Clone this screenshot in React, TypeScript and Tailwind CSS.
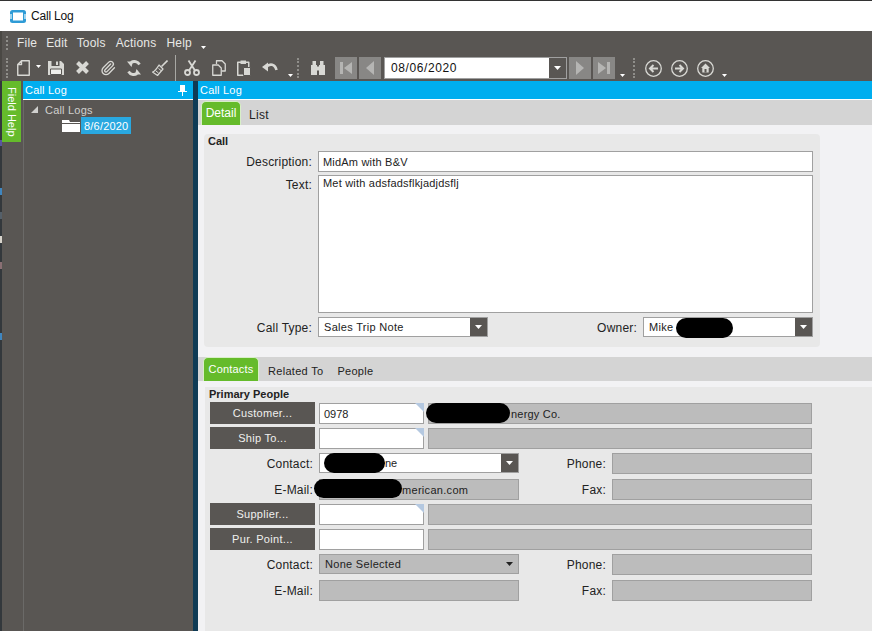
import React from "react";
import { Paperclip } from "lucide-react";

const L = "#d8d8d4";
const D = "#595653";

const Grip = ({ h = 20, className = "" }: { h?: number; className?: string }) => (
  <div className={"w-[2px] border-l-2 border-dotted border-[#8f8e8a] shrink-0 " + className} style={{ height: h }} />
);

const More = ({ className = "" }: { className?: string }) => (
  <svg width="5" height="3" viewBox="0 0 5 3" className={"shrink-0 " + className}><path d="M0 0h5L2.500 3z" fill="#fff" /></svg>
);

const Icon = ({ w = 16, className = "", children }: { w?: number; className?: string; children: React.ReactNode }) => (
  <svg width={w} height="16" viewBox={`0 0 ${w} 16`} fill="none" stroke={L} strokeLinejoin="round" className={"shrink-0 " + className}>{children}</svg>
);

const NavBtn = ({ d }: { d: React.ReactNode }) => (
  <div className="w-[22px] h-[22px] bg-[#888785] flex items-center justify-center">
    <svg width="16" height="16" viewBox="0 0 16 16" fill="#b5b5b3">{d}</svg>
  </div>
);

const Caret = () => (
  <div className="w-[17px] self-stretch bg-[#595653] flex items-center justify-center shrink-0">
    <svg width="7" height="4" viewBox="0 0 7 4"><path d="M0 0h7L3.500 4z" fill="#fff" /></svg>
  </div>
);

const Redact = ({ className }: { className: string }) => (
  <span className={"absolute bg-black rounded-[10px] " + className} />
);

const Lookup = ({ label }: { label: string }) => (
  <div className="w-[105px] h-[22px] bg-[#595653] text-[#f0f0ee] text-[11px] flex items-center justify-center tracking-[0.3px] shrink-0">{label}</div>
);

const WhiteField = ({ corner, children }: { corner?: boolean; children?: React.ReactNode }) => (
  <div className="relative w-[105px] h-[21px] mt-[1px] bg-white border border-[#a0a0a0] flex items-center pl-[4px] text-[#222] shrink-0">
    {children}
    {corner && <span className="absolute top-[-1px] right-[-1px] w-0 h-0 border-l-[9px] border-l-transparent border-t-[9px] border-t-[#b4c8e0]" />}
  </div>
);

const Gray = ({ className, children }: { className: string; children?: React.ReactNode }) => (
  <div className={"h-[21px] bg-[#bcbcbc] border border-[#a0a0a0] flex items-center shrink-0 " + className}>{children}</div>
);

const Label = ({ w = 105, pr = 6, low, children }: { w?: number; pr?: number; low?: boolean; children: React.ReactNode }) => (
  <div className={"text-right text-[#222] shrink-0 tracking-[0.2px] " + (low ? "pt-[2px]" : "")} style={{ width: w, paddingRight: pr }}>{children}</div>
);

const spots: [number, string][] = [
  [59, "#33383c"], [6, "#5a55a0"], [42, "#33383c"], [7, "#3f86c0"], [17, "#33383c"], [7, "#55606a"],
  [17, "#33383c"], [7, "#d8d4cc"], [19, "#33383c"], [7, "#8a7074"], [64, "#33383c"], [7, "#3f86c0"], [341, "#33383c"],
];

export default function App() {
  return (
    <div className="w-[872px] h-[631px] overflow-hidden flex flex-col bg-[#595653] text-[12px] leading-[14px] text-[#222] font-['Liberation_Sans',sans-serif]">
      <div className="h-[31px] shrink-0 bg-white border-t border-[#333] flex items-center pl-[10px] gap-[5px]">
        <svg width="16" height="13" viewBox="0 0 16 13">
          <rect x="0" y="0" width="16" height="13" rx="2.500" fill="#2e9bd6" />
          <rect x="3" y="2.500" width="10" height="8" fill="#fff" />
          <rect x="0" y="4" width="2" height="5" fill="#9fd4ee" />
          <rect x="14" y="4" width="2" height="5" fill="#9fd4ee" />
        </svg>
        <span className="text-[#111] text-[12px] tracking-[-0.2px]">Call Log</span>
      </div>

      <div className="flex-1 flex min-h-0">
        <div className="w-[2px] shrink-0 flex flex-col">
          <div className="h-[50px] bg-[#4a4844] shrink-0" />
          {spots.map(([h, c], i) => (
            <div key={i} className="shrink-0" style={{ height: h, backgroundColor: c }} />
          ))}
        </div>

        <div className="flex-1 min-w-0 flex flex-col">
          <div className="h-[24px] shrink-0 flex items-center text-[#e8e8e6] tracking-[0.2px]">
            <Grip h={14} className="ml-[4px]" />
            <span className="ml-[9px]">File</span>
            <span className="ml-[9px]">Edit</span>
            <span className="ml-[9px]">Tools</span>
            <span className="ml-[10px]">Actions</span>
            <span className="ml-[10px]">Help</span>
            <More className="ml-[9px] mt-[8px]" />
          </div>

          <div className="h-[26px] shrink-0 flex items-center">
            <Grip className="ml-[4px]" />
            <Icon w={13} className="ml-[9px]">
              <path d="M4.500.75h7.750v14.500H.75V4.500z M4.500.75V4.500H.75" strokeWidth="1.400" />
            </Icon>
            <More className="ml-[6px] mb-[3px]" />
            <Icon className="ml-[7px]">
              <path d="M0 1h13l3 3v11H0z" fill={L} stroke="none" />
              <rect x="3.500" y="1" width="8" height="5" fill={D} stroke="none" />
              <rect x="8" y="1.500" width="2" height="3.500" fill={L} stroke="none" />
              <rect x="2.500" y="9" width="11" height="5.500" fill="#efefec" stroke={D} strokeWidth="1" />
            </Icon>
            <Icon w={15} className="ml-[11px]">
              <path d="M2.500 2.500l10 10M12.500 2.500l-10 10" strokeWidth="4" />
            </Icon>
            <Paperclip size={16} strokeWidth={2} color={L} className="ml-[10px] shrink-0" />
            <Icon className="ml-[10px]">
              <path d="M13.500 4.500A6 6 0 0 0 5 2.500" strokeWidth="2.800" />
              <path d="M2.500 11.500A6 6 0 0 0 11 13.500" strokeWidth="2.800" />
              <path d="M1 1.500h6L5.500 7zM15 14.500H9L10.500 9z" fill={L} stroke="none" />
            </Icon>
            <Icon className="ml-[10px]">
              <path d="M15.500.5L9.500 6.500" strokeWidth="1.600" />
              <path d="M7 5l4 4-5.500 6.500L.5 12C3 11.500 5 8 7 5z" strokeWidth="1.200" />
              <path d="M4 11l2.500 2M6.500 8.500l2.500 2" strokeWidth="1" />
            </Icon>
            <div className="w-[1px] h-[26px] bg-[#a8a8a4] ml-[7px] shrink-0" />
            <Icon className="ml-[8px]">
              <circle cx="3.500" cy="12.500" r="2.500" strokeWidth="1.800" />
              <circle cx="12.500" cy="12.500" r="2.500" strokeWidth="1.800" />
              <path d="M5 10.500L11.500.5M11 10.500L4.500.5" strokeWidth="1.800" />
            </Icon>
            <Icon w={14} className="ml-[12px]">
              <path d="M4.500 4V.75H10l3.250 3.250V11H10" strokeWidth="1.300" />
              <path d="M.75 5h5.500l3 3v7.250H.75z" strokeWidth="1.300" />
            </Icon>
            <Icon w={14} className="ml-[11px]">
              <rect x=".75" y="2.250" width="11" height="13" strokeWidth="1.500" />
              <rect x="3.500" y=".5" width="5.500" height="3.500" fill={L} stroke="none" />
              <rect x="6.500" y="7.500" width="7" height="8" fill={L} stroke={D} strokeWidth="1" />
            </Icon>
            <Icon className="ml-[11px]">
              <path d="M4 7c4-4 9-3 10.500 3" strokeWidth="2.600" />
              <path d="M0 7l6-4.500v9z" fill={L} stroke="none" />
            </Icon>
            <More className="ml-[10px] mt-[14px]" />
            <Grip className="ml-[4px]" />
            <Icon className="ml-[11px]">
              <path d="M2.500 1H6v4H2.500zM10 1h3.500v4H10zM1 5h6v10H1zM9 5h6v10H9zM7 6.500h2v4H7z" fill={L} stroke="none" />
            </Icon>
            <div className="flex gap-[2px] ml-[9px] shrink-0">
              <NavBtn d={<path d="M2 2h3v12H2zM14 2v12L6 8z" />} />
              <NavBtn d={<path d="M12 1v14L4 8z" />} />
            </div>
            <div className="w-[183px] h-[22px] ml-[3px] bg-white border border-[#a0a0a0] flex items-center text-[#111] shrink-0">
              <span className="flex-1 pl-[6px] tracking-[0.6px]">08/06/2020</span>
              <Caret />
            </div>
            <div className="flex gap-[2px] ml-[2px] shrink-0">
              <NavBtn d={<path d="M4 1v14l8-7z" />} />
              <NavBtn d={<path d="M2 2v12l8-6zM11 2h3v12h-3z" />} />
            </div>
            <More className="ml-[5px] mt-[14px]" />
            <Grip className="ml-[8px]" />
            <svg width="17" height="17" viewBox="0 0 17 17" fill="none" stroke={L} strokeWidth="1.300" className="ml-[10px] shrink-0"><circle cx="8.500" cy="8.500" r="7.800" /><path d="M13 8.500H5M8.500 5L5 8.500 8.500 12" strokeWidth="2" /></svg>
            <svg width="17" height="17" viewBox="0 0 17 17" fill="none" stroke={L} strokeWidth="1.300" className="ml-[9px] shrink-0"><circle cx="8.500" cy="8.500" r="7.800" /><path d="M4 8.500h8M8.500 5L12 8.500 8.500 12" strokeWidth="2" /></svg>
            <svg width="17" height="17" viewBox="0 0 17 17" fill="none" stroke={L} strokeWidth="1.300" className="ml-[9px] shrink-0"><circle cx="8.500" cy="8.500" r="7.800" /><path d="M8.500 3.500L4 8h1.300v4.500h6.400V8H13z" fill={L} stroke="none" /><rect x="7.500" y="9" width="2" height="3.500" fill={D} stroke="none" /></svg>
            <More className="ml-[8px] mt-[14px]" />
          </div>

          <div className="flex-1 flex min-h-0">
            <div className="w-[19px] shrink-0">
              <div className="h-[61px] bg-[#65bb2b] flex items-center justify-center">
                <span className="[writing-mode:vertical-rl] text-white text-[11px]">Field Help</span>
              </div>
            </div>
            <div className="w-[2px] shrink-0" />
            <div className="w-[170px] shrink-0 flex flex-col">
              <div className="h-[18px] bg-[#00aeef] text-white text-[11px] flex items-center pl-[2px] tracking-[0.2px] justify-between pr-[6px]">
                <span>Call Log</span>
                <svg width="9" height="11" viewBox="0 0 9 11" fill="#fff"><path d="M2 0h5v6h2v1H5v4H4V7H0V6h2z" /></svg>
              </div>
              <div className="h-[1px] bg-white" />
              <div className="flex-1 border-l border-[#6b6a68] pl-[7px] pt-[3px] text-[#d0d0ce] text-[11px]">
                <div className="flex items-center h-[13px] tracking-[0.2px]">
                  <svg width="7" height="7" viewBox="0 0 7 7" className="mr-[7px]"><path d="M7 0v7H0z" fill="#d0d0ce" /></svg>
                  Call Logs
                </div>
                <div className="flex items-center h-[17px] pl-[31px] mt-[1px]">
                  <svg width="18" height="13" viewBox="0 0 18 13" className="mr-[1px]"><path d="M0 1h7l1 2h10v10H0z" fill="#fff" /><rect x="0" y="4" width="18" height="1" fill="#595653" /></svg>
                  <span className="bg-[#29a8e0] text-white h-[17px] px-[3px] flex items-center tracking-[0.2px]">8/6/2020</span>
                </div>
              </div>
            </div>
            <div className="w-[5px] bg-[#0f3b55] shrink-0" />
            <div className="flex-1 min-w-0 flex flex-col bg-[#f2f2f4]">
              <div className="h-[18px] bg-[#00aeef] text-white text-[11px] flex items-center pl-[2px] tracking-[0.2px] shrink-0">Call Log</div>
              <div className="h-[1px] bg-white shrink-0" />
              <div className="h-[25px] bg-[#d4d4d4] flex pl-[3px] items-stretch shrink-0">
                <div className="w-[40px] mt-[1px] bg-[#65bb2b] border border-b-0 border-[#d8efc8] rounded-t-[5px] text-white flex items-center justify-center pb-[2px]">Detail</div>
                <div className="ml-[8px] flex items-center pt-[5px] text-[#222] tracking-[0.3px]">List</div>
              </div>

              <div className="ml-[6px] mt-[9px] w-[616px] h-[213px] bg-[#e8e8e8] rounded-[4px] flex flex-col shrink-0">
                <div className="pl-[4px] font-bold text-[11px] text-[#222] h-[17px]">Call</div>
                <div className="flex h-[21px] items-center">
                  <Label w={114}>Description:</Label>
                  <div className="w-[495px] h-[21px] bg-white border border-[#a0a0a0] flex items-center pl-[4px] text-[11px] tracking-[0.2px]">MidAm with B&amp;V</div>
                </div>
                <div className="flex mt-[3px]">
                  <Label w={114}><span className="block pt-[3px]">Text:</span></Label>
                  <div className="w-[495px] h-[138px] bg-white border border-[#a0a0a0] pl-[4px] text-[11px] tracking-[0.2px]">Met with adsfadsflkjadjdsflj</div>
                </div>
                <div className="flex items-center h-[20px] mt-[4px]">
                  <Label w={114} low>Call Type:</Label>
                  <div className="w-[170px] h-[20px] bg-white border border-[#a0a0a0] flex items-center pl-[5px] text-[11px] tracking-[0.3px]">
                    <span className="flex-1">Sales Trip Note</span><Caret />
                  </div>
                  <Label w={155} low>Owner:</Label>
                  <div className="relative w-[170px] h-[20px] bg-white border border-[#a0a0a0] flex items-center pl-[5px] text-[11px] tracking-[0.3px]">
                    <span className="flex-1">Mike</span><Caret />
                    <Redact className="left-[32px] top-[0px] w-[57px] h-[20px]" />
                  </div>
                </div>
              </div>

              <div className="mt-[10px] h-[24px] bg-[#d4d4d4] flex pl-[5px] items-stretch shrink-0">
                <div className="w-[56px] bg-[#65bb2b] border border-b-0 border-[#d8efc8] rounded-t-[5px] text-white flex items-center justify-center pb-[2px] tracking-[0.2px] text-[11px]">Contacts</div>
                <div className="ml-[9px] flex items-center pt-[3px] tracking-[0.3px] text-[11px]">Related To</div>
                <div className="ml-[14px] flex items-center pt-[3px] tracking-[0.3px] text-[11px]">People</div>
              </div>

              <div className="ml-[7px] mt-[6px] flex-1 bg-[#e8e8e8] pl-[5px] flex flex-col">
                <div className="font-bold text-[11px] h-[15px] text-[#222] -ml-[1px]">Primary People</div>
                <div className="flex flex-col text-[#222]">
                  <div className="flex h-[22px] gap-[4px] mb-[3px]">
                    <Lookup label="Customer..." />
                    <WhiteField corner><span className="text-[11px]">0978</span></WhiteField>
                    <Gray className="relative mt-[1px] w-[384px] pl-[82px] text-[11px] tracking-[0.2px]">
                      nergy Co.
                      <Redact className="left-[-3px] top-[-1px] w-[84px] h-[20px]" />
                    </Gray>
                  </div>
                  <div className="flex h-[22px] gap-[4px] mb-[4px]">
                    <Lookup label="Ship To..." />
                    <WhiteField corner />
                    <Gray className="mt-[1px] w-[384px]" />
                  </div>
                  <div className="flex h-[20px] items-center mb-[6px]">
                    <Label pr={2} low>Contact:</Label>
                    <div className="relative ml-[4px] w-[200px] h-[20px] bg-white border border-[#a0a0a0] flex items-center text-[11px] shrink-0">
                      <span className="flex-1 pl-[65px]">ne</span><Caret />
                      <Redact className="left-[4px] top-[-1px] w-[61px] h-[20px]" />
                    </div>
                    <Label w={93} low>Phone:</Label>
                    <Gray className="w-[200px]" />
                  </div>
                  <div className="flex h-[21px] items-center mb-[3px]">
                    <Label pr={2}>E-Mail:</Label>
                    <div className="relative ml-[4px]">
                      <Gray className="w-[200px] pl-[82px] text-[11px] tracking-[0.3px]">merican.com</Gray>
                      <Redact className="left-[-5px] top-[0px] w-[88px] h-[19px]" />
                    </div>
                    <Label w={93}>Fax:</Label>
                    <Gray className="w-[200px]" />
                  </div>
                  <div className="flex h-[22px] gap-[4px] mb-[3px]">
                    <Lookup label="Supplier..." />
                    <WhiteField corner />
                    <Gray className="mt-[1px] w-[384px]" />
                  </div>
                  <div className="flex h-[22px] gap-[4px] mb-[4px]">
                    <Lookup label="Pur. Point..." />
                    <WhiteField />
                    <Gray className="mt-[1px] w-[384px]" />
                  </div>
                  <div className="flex h-[20px] items-center mb-[6px]">
                    <Label pr={2} low>Contact:</Label>
                    <div className="ml-[4px] w-[200px] h-[20px] bg-[#bcbcbc] border border-[#a0a0a0] flex items-center pl-[5px] text-[11px] tracking-[0.3px] shrink-0">
                      <span className="flex-1 pb-[1px]">None Selected</span>
                      <svg width="7" height="4" viewBox="0 0 7 4" className="mr-[5px]"><path d="M0 0h7L3.500 4z" fill="#222" /></svg>
                    </div>
                    <Label w={93} low>Phone:</Label>
                    <Gray className="w-[200px]" />
                  </div>
                  <div className="flex h-[21px] items-center">
                    <Label pr={2}>E-Mail:</Label>
                    <Gray className="ml-[4px] w-[200px]" />
                    <Label w={93}>Fax:</Label>
                    <Gray className="w-[200px]" />
                  </div>
                </div>
              </div>
            </div>
          </div>
        </div>
      </div>
    </div>
  );
}
